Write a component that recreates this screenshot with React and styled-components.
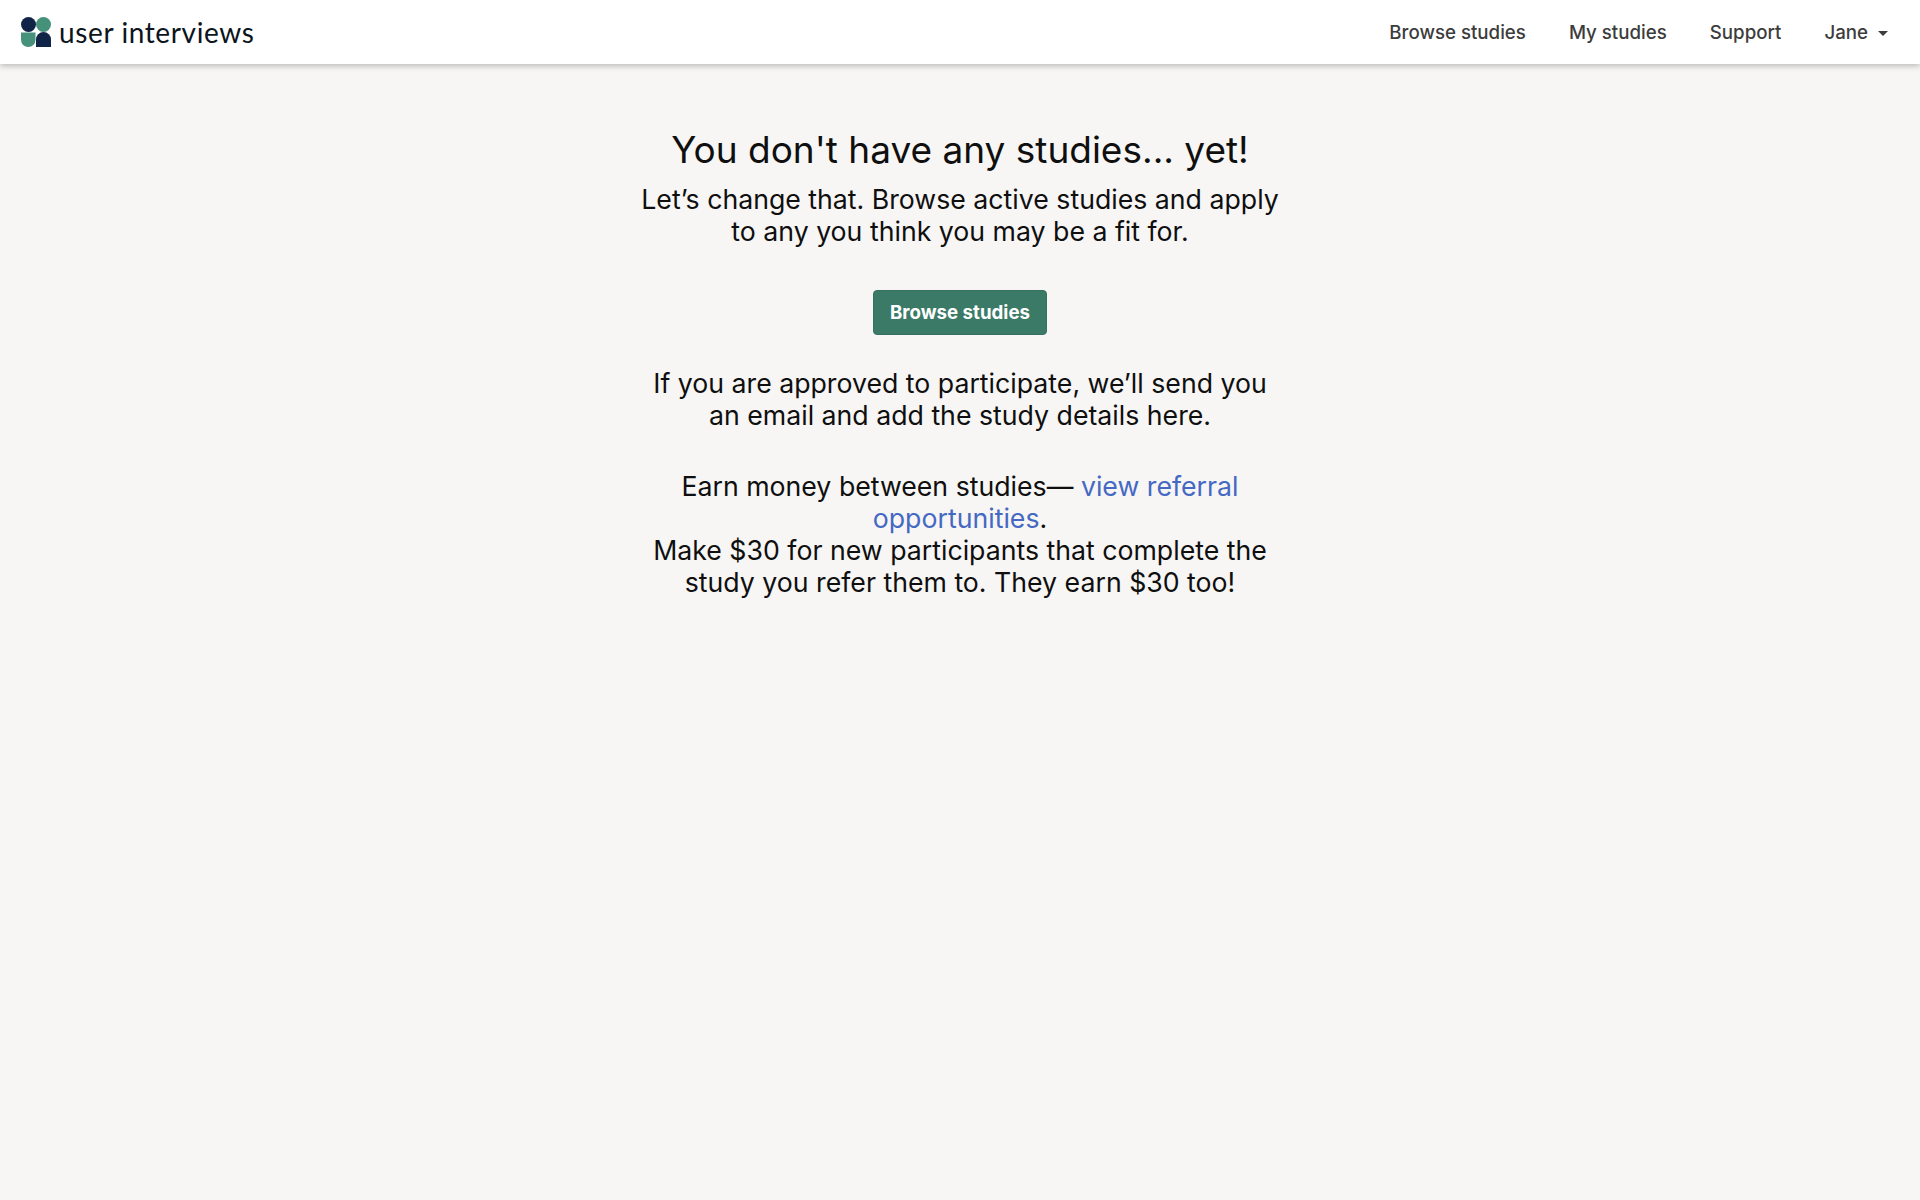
import React from 'react';
import styled, { createGlobalStyle } from 'styled-components';

const GlobalStyle = createGlobalStyle`
  html, body {
    margin: 0;
    padding: 0;
    background-color: #f7f6f5;
  }

  body {
    font-family: Inter, "Liberation Sans", sans-serif;
    color: #0f0f0f;
  }
`

const Page = styled.div`
  min-height: 1200px;
  background-color: #f7f6f5;
`

const Header = styled.header`
  height: 64px;
  background-color: #fff;
  box-shadow: 0 2px 6px rgba(0,0,0,0.25);
  display: flex;
  justify-content: space-between;
  align-items: center;
  padding: 0 32px 0 21px;
`

const Brand = styled.a`
  display: flex;
  align-items: center;
  gap: 8px;
  text-decoration: none;
`

const BrandName = styled.span`
  font-family: Lato, sans-serif;
  font-size: 28px;
  letter-spacing: 0.62px;
  color: #0c1420;
`

const Nav = styled.nav`
  display: flex;
  align-items: center;
  gap: 43px;
`

const NavLink = styled.a`
  font-size: 18.7px;
  font-weight: 500;
  color: #3c3c3c;
  text-decoration: none;
  display: flex;
  align-items: center;
`

const Caret = styled.span`
  width: 0;
  height: 0;
  margin-left: 10px;
  margin-top: 3px;
  border-left: 5px solid transparent;
  border-right: 5px solid transparent;
  border-top: 5px solid #3c3c3c;
`

const Main = styled.main`
  width: 640px;
  margin: 0 auto;
  padding-top: 61px;
  text-align: center;
`

const Title = styled.h1`
  margin: 0 0 8px;
  font-size: 37px;
  line-height: 50px;
  font-weight: 400;
`

const Text = styled.p`
  margin: 0 0 ${(props) => props.$gap}px;
  font-size: 26.7px;
  line-height: 32px;
`

const Button = styled.a`
  display: inline-block;
  box-sizing: border-box;
  height: 45px;
  line-height: 43px;
  padding: 0 16px;
  margin-bottom: 32px;
  font-size: 18.7px;
  font-weight: 700;
  color: #fff;
  background-color: #3b7a66;
  border: 1px solid #36705e;
  border-radius: 4px;
  text-decoration: none;
`

const Link = styled.a`
  color: #4569c2;
  text-decoration: none;
`

const App = () => {
  return (
    <Page>
      <GlobalStyle />
      <Header>
        <Brand href="#">
          <svg width="30" height="30" viewBox="0 0 30 30">
            <circle cx="7.5" cy="7.5" r="7.5" fill="#0f2447" />
            <circle cx="22.5" cy="7.5" r="7.5" fill="#45917a" />
            <path d="M0 15.5h14.5v7.25a7.25 7.25 0 0 1-14.5 0z" fill="#45917a" />
            <path d="M15 30v-7.5a7.5 7.5 0 0 1 15 0V30z" fill="#0f2447" />
          </svg>
          <BrandName>user interviews</BrandName>
        </Brand>
        <Nav>
          <NavLink href="#">Browse studies</NavLink>
          <NavLink href="#">My studies</NavLink>
          <NavLink href="#">Support</NavLink>
          <NavLink href="#">Jane<Caret /></NavLink>
        </Nav>
      </Header>
      <Main>
        <Title>You don't have any studies... yet!</Title>
        <Text $gap={43}>Let’s change that. Browse active studies and apply to any you think you may be a fit for.</Text>
        <Button href="#">Browse studies</Button>
        <Text $gap={39}>If you are approved to participate, we’ll send you<br />an email and add the study details here.</Text>
        <Text $gap={0}>
          Earn money between studies— <Link href="#">view referral opportunities</Link>.<br />
          Make $30 for new participants that complete the study you refer them to. They earn $30 too!
        </Text>
      </Main>
    </Page>
  );
}

export default App;
